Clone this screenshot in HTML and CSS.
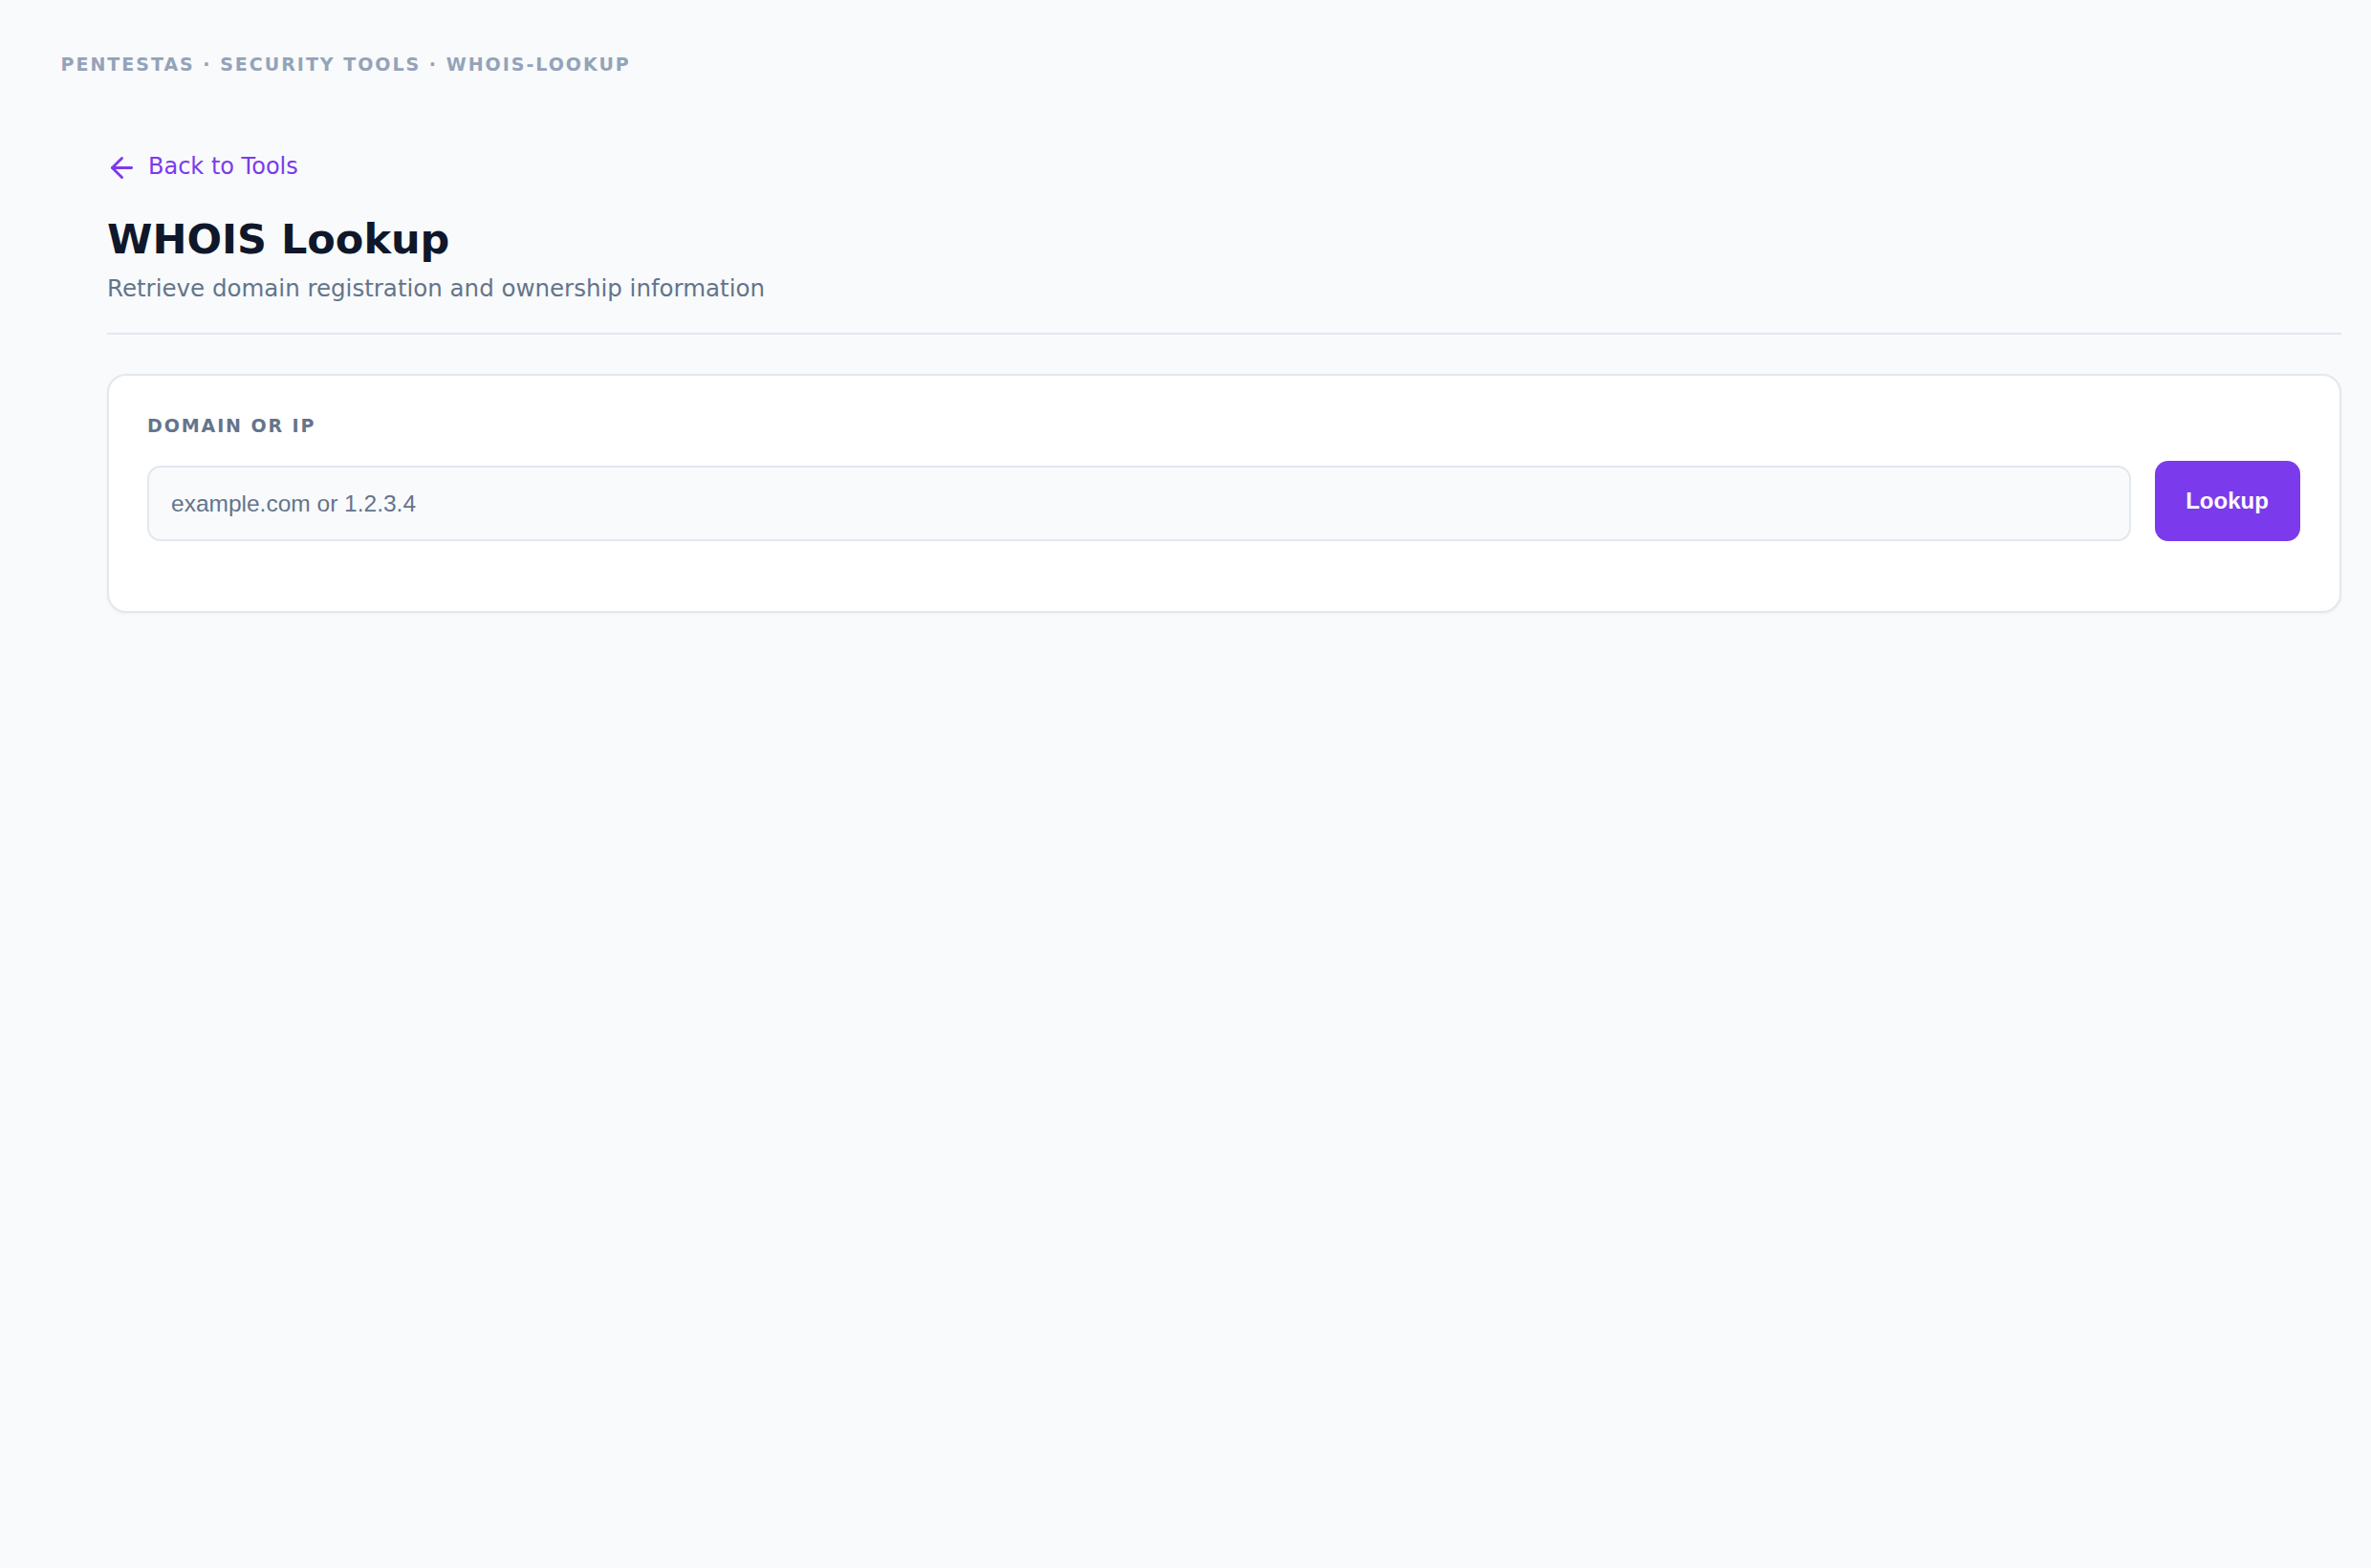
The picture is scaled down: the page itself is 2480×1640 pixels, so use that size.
FILE: index.html
```html
<!DOCTYPE html>
<html lang="en">
<head>
<meta charset="utf-8">
<title>WHOIS Lookup</title>
<link rel="stylesheet" href="styles.css">
</head>
<body>
<div class="page">
  <div class="crumb">PENTESTAS · SECURITY TOOLS · WHOIS-LOOKUP</div>
  <main class="main">
    <header class="header">
      <a class="back" href="#">
        <svg class="back-icon" width="23" height="23" viewBox="4 4 16 16" fill="none" stroke="currentColor" stroke-width="2" stroke-linecap="round" stroke-linejoin="round" overflow="visible"><path d="M19 12H5"/><path d="M12 19l-7-7 7-7"/></svg>
        <span>Back to Tools</span>
      </a>
      <h1 class="title">WHOIS Lookup</h1>
      <p class="subtitle">Retrieve domain registration and ownership information</p>
    </header>
    <section class="card">
      <div class="form-row">
        <div class="field">
          <label class="label" for="q">DOMAIN OR IP</label>
          <input class="input" id="q" type="text" placeholder="example.com or 1.2.3.4">
        </div>
        <button class="btn" type="button">Lookup</button>
      </div>
    </section>
  </main>
</div>
</body>
</html>
```

FILE: styles.css
```css
html, body {
  margin: 0;
  padding: 0;
  background: #f8fafc;
}
body {
  font-family: "DejaVu Sans", sans-serif;
  min-height: 1640px;
}
.page {
  padding: 53px 31.5px 40px 63.5px;
}
.crumb {
  font-size: 19px;
  line-height: 28px;
  font-weight: 700;
  letter-spacing: 0.105em;
  color: #94a3b8;
}
.main {
  margin-left: 48.5px;
  margin-top: 77px;
}
.header {
  padding-bottom: 28px;
  border-bottom: 2px solid #e2e8f0;
}
.back {
  display: inline-flex;
  align-items: center;
  gap: 16px;
  font-size: 24px;
  line-height: 32px;
  color: #7c3aed;
  text-decoration: none;
}
.back-icon {
  display: block;
  margin-left: 4px;
  margin-top: 3px;
}
.title {
  margin: 32.5px 0 0;
  font-size: 43px;
  line-height: 52px;
  font-weight: 700;
  color: #0f172a;
}
.subtitle {
  margin: 8.5px 0 0;
  font-size: 24.5px;
  line-height: 36px;
  color: #64748b;
}
.card {
  margin-top: 41px;
  background: #ffffff;
  border: 2px solid #e2e8f0;
  border-radius: 20px;
  padding: 40px 41px 73px 40px;
  box-shadow: 0 1px 3px rgba(15, 23, 42, 0.05);
}
.form-row {
  display: flex;
  align-items: flex-end;
  gap: 25px;
}
.field {
  flex: 1;
  display: flex;
  flex-direction: column;
}
.label {
  display: block;
  font-size: 19px;
  line-height: 24px;
  font-weight: 700;
  letter-spacing: 0.1em;
  color: #64748b;
  margin-bottom: 30px;
}
.input {
  box-sizing: border-box;
  height: 79px;
  width: 100%;
  border: 2px solid #e2e8f0;
  border-radius: 14px;
  background: #f8fafc;
  padding: 0 23px;
  font-family: "Liberation Sans", Arial, sans-serif;
  font-size: 24.5px;
  color: #0f172a;
  outline: none;
}
.input::placeholder {
  color: #64748b;
  opacity: 1;
}
.btn {
  box-sizing: border-box;
  width: 152px;
  height: 84px;
  border: none;
  border-radius: 14px;
  background: #7c3aed;
  color: #ffffff;
  font-family: "Liberation Sans", Arial, sans-serif;
  font-size: 24px;
  font-weight: 700;
  cursor: pointer;
}
```
